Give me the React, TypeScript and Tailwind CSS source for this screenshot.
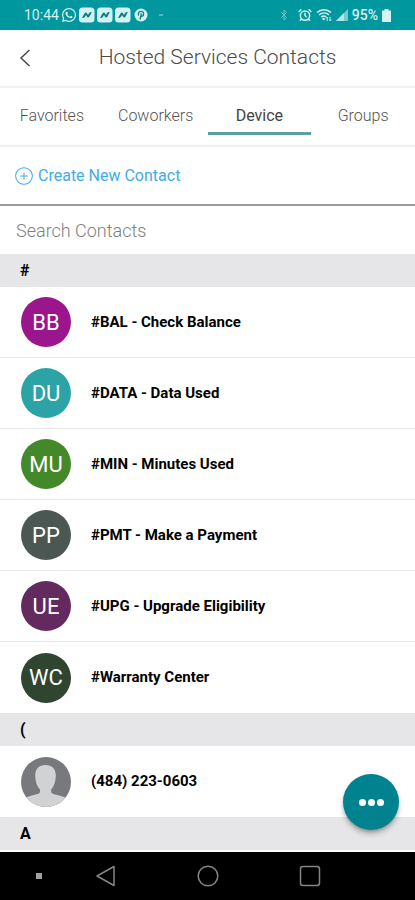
import { FaWhatsapp } from "react-icons/fa";
import { AlarmClock, Bluetooth, CirclePlus } from "lucide-react";

const tabs = ["Favorites", "Coworkers", "Device", "Groups"];

const sections = [
    {
        letter: "#",
        contacts: [
            { name: "#BAL - Check Balance", initials: "BB", color: "bg-[#9b168c]" },
            { name: "#DATA - Data Used", initials: "DU", color: "bg-[#2ca3a6]" },
            { name: "#MIN - Minutes Used", initials: "MU", color: "bg-[#43892a]" },
            { name: "#PMT - Make a Payment", initials: "PP", color: "bg-[#4a5753]" },
            { name: "#UPG - Upgrade Eligibility", initials: "UE", color: "bg-[#632a60]" },
            { name: "#Warranty Center", initials: "WC", color: "bg-[#30452f]" },
        ],
    },
    {
        letter: "(",
        contacts: [{ name: "(484) 223-0603", initials: "", color: "bg-[#77797c]" }],
    },
    { letter: "A", contacts: [] },
];

function NewsIcon() {
    return (
        <svg viewBox="0 0 16 16" className="size-4">
            <rect y="0.5" width="15.5" height="15" rx="3.5" fill="#d5f1f2" />
            <path d="M3 11 5.5 6.500C6.200 5.200 7.500 5.200 8.100 6.400L9 8l1-1.800c.5-.9 1.200-1.200 2.800-1.200L10.500 9.500c-.7 1.300-2 1.300-2.600.1L7 8 6 9.800C5.400 10.800 4.500 11 3 11z" fill="#087e86" />
        </svg>
    );
}

function StatusBar() {
    return (
        <div className="flex h-[30px] items-center justify-between bg-[#00979f] px-6 text-sm text-[#d5f1f2]">
            <div className="flex items-center gap-0.5">
                <span>10:44</span>
                <FaWhatsapp className="size-4" />
                <NewsIcon />
                <NewsIcon />
                <NewsIcon />
                <svg viewBox="0 0 16 16" className="size-4">
                    <circle cx="8" cy="8" r="6.5" fill="#d5f1f2" />
                    <path d="M7 12.5 8.400 6.500M5.700 8.600C4.200 5.400 7 4.200 8.700 4.400c2.600.3 2.500 4.600.2 4.900-.7.1-1.100-.2-1.300-.6" fill="none" stroke="#087e86" strokeWidth="1.3" />
                </svg>
                <span className="ml-2 h-0.5 w-1 bg-[#55babf]" />
            </div>
            <div className="flex items-center gap-1">
                <Bluetooth className="size-3 text-[#6cc6ca]" />
                <AlarmClock className="ml-1 size-3.5" strokeWidth={2.5} />
                <svg viewBox="0 0 16 14" className="h-3.5 w-4" fill="none" stroke="currentColor">
                    <path d="M1 4.500C5 .8 11 .8 15 4.500M3 7c3-2.700 7-2.700 10 0M5.300 9.200c1.500-1.400 3.400-1.400 4.700-.3" strokeWidth="1.5" />
                    <circle cx="7.6" cy="11" r="1.3" fill="currentColor" stroke="none" />
                    <path d="M11.200 13V9m-1.200 1.300L11.200 9M14 9v4m1.200-1.300L14 13" />
                </svg>
                <svg viewBox="0 0 12 12" className="size-3">
                    <path d="M0 12 12 0v12z" fill="#76cbce" />
                    <path d="M0 12 8 4v8z" fill="#b3e4e6" />
                </svg>
                <span className="font-medium">95%</span>
                <svg viewBox="0 0 9 13" className="h-[13px] w-[9px]" fill="currentColor">
                    <path d="M2.500 0h4v1.500H9V13H0V1.500h2.500z" />
                </svg>
            </div>
        </div>
    );
}

function Avatar({ initials, color }: { initials: string; color: string }) {
    return (
        <div className={`flex size-[50px] shrink-0 items-center justify-center overflow-hidden rounded-full text-[22px] text-white ${color}`}>
            {initials || (
                <svg viewBox="0 0 50 50" className="size-full" fill="#d1d2d4">
                    <path d="M24.500 8c6.500 0 10.300 4 10.300 10.500 0 6-2 11-4.600 14v2.800c1.500 2.600 10 3.200 14 5.200V50H5v-9.500c4-2 12.500-2.600 14-5.200v-2.800c-3-3-4.800-8-4.800-14C14.200 12 18 8 24.500 8z" />
                </svg>
            )}
        </div>
    );
}

export default function App() {
    return (
        <div className="relative flex min-h-screen flex-col bg-white font-['Roboto','Liberation_Sans',sans-serif]">
            <StatusBar />

            {/* Title */}
            <header className="relative flex h-[58px] items-center justify-center border-b-2 border-[#f1f1f1] pl-5">
                <button aria-label="Back" className="absolute left-4 text-[#4a4a4a]">
                    <svg viewBox="0 0 18 18" className="size-[18px]" fill="none" stroke="currentColor" strokeWidth="1.5">
                        <path d="M13.500 1 5 9l8.500 8" />
                    </svg>
                </button>
                <h1 className="text-[21px] font-light text-[#4a4a4a]">Hosted Services Contacts</h1>
            </header>

            {/* Tabs */}
            <nav className="grid h-[59px] grid-cols-4 border-b-2 border-[#f1f1f1]">
                {tabs.map((tab) => (
                    <button
                        key={tab}
                        className={
                            tab === "Device"
                                ? "mb-2.5 border-b-3 border-[#5ba09f] pt-3 text-base text-[#444]"
                                : "mb-2.5 border-b-3 border-transparent pt-3 text-base font-light text-[#555]"
                        }
                    >
                        {tab}
                    </button>
                ))}
            </nav>

            <div className="flex h-[59px] items-center border-b-2 border-[#9b9b9b] px-3.5">
                <button className="flex items-center gap-1 text-base text-[#42abe9]">
                    <CirclePlus className="size-5" strokeWidth={1.25} />
                    Create New Contact
                </button>
            </div>

            <input
                type="text"
                aria-label="Search Contacts"
                placeholder="Search Contacts"
                className="h-12 w-full px-4 text-lg font-light text-[#333] outline-none placeholder:text-[#808080]"
            />

            {/* Contact list */}
            <main className="flex-1">
                {sections.map((section) => (
                    <section key={section.letter}>
                        <h2 className="flex h-[33px] items-center bg-[#e6e6e8] px-5 text-base font-bold text-black">{section.letter}</h2>
                        <ul className="divide-y divide-[#e9e9e9]">
                            {section.contacts.map((contact) => (
                                <li key={contact.name} className="flex h-[71px] items-center gap-5 px-[21px]">
                                    <Avatar initials={contact.initials} color={contact.color} />
                                    <span className="text-[15px] font-bold text-black">{contact.name}</span>
                                </li>
                            ))}
                        </ul>
                    </section>
                ))}
            </main>

            <button aria-label="More" className="absolute right-4 bottom-[70px] flex size-14 items-center justify-center gap-0.5 rounded-full bg-[#00838f] shadow-md shadow-black/30">
                <span className="size-[7px] rounded-full bg-white" />
                <span className="size-[7px] rounded-full bg-white" />
                <span className="size-[7px] rounded-full bg-white" />
            </button>

            {/* System navigation */}
            <footer className="flex h-12 items-center justify-between bg-black pr-[94px] pl-9 text-[#858585]">
                <span className="size-1.5 bg-[#a0a0a0]" />
                <div className="flex w-4/5 items-center justify-between pl-0.5">
                    <button aria-label="System back">
                        <svg viewBox="0 0 22 22" className="size-[22px]" fill="none" stroke="currentColor" strokeWidth="1.5" strokeLinejoin="round">
                            <path d="M19 1.500v19L2 11z" />
                        </svg>
                    </button>
                    <button aria-label="Home">
                        <svg viewBox="0 0 22 22" className="size-[22px]" fill="none" stroke="currentColor" strokeWidth="1.5">
                            <circle cx="11" cy="11" r="9.8" />
                        </svg>
                    </button>
                    <button aria-label="Recent apps">
                        <svg viewBox="0 0 22 22" className="size-[22px]" fill="none" stroke="currentColor" strokeWidth="1.5">
                            <rect x="1.5" y="1.5" width="19" height="19" rx="2.5" />
                        </svg>
                    </button>
                </div>
            </footer>
        </div>
    );
}
